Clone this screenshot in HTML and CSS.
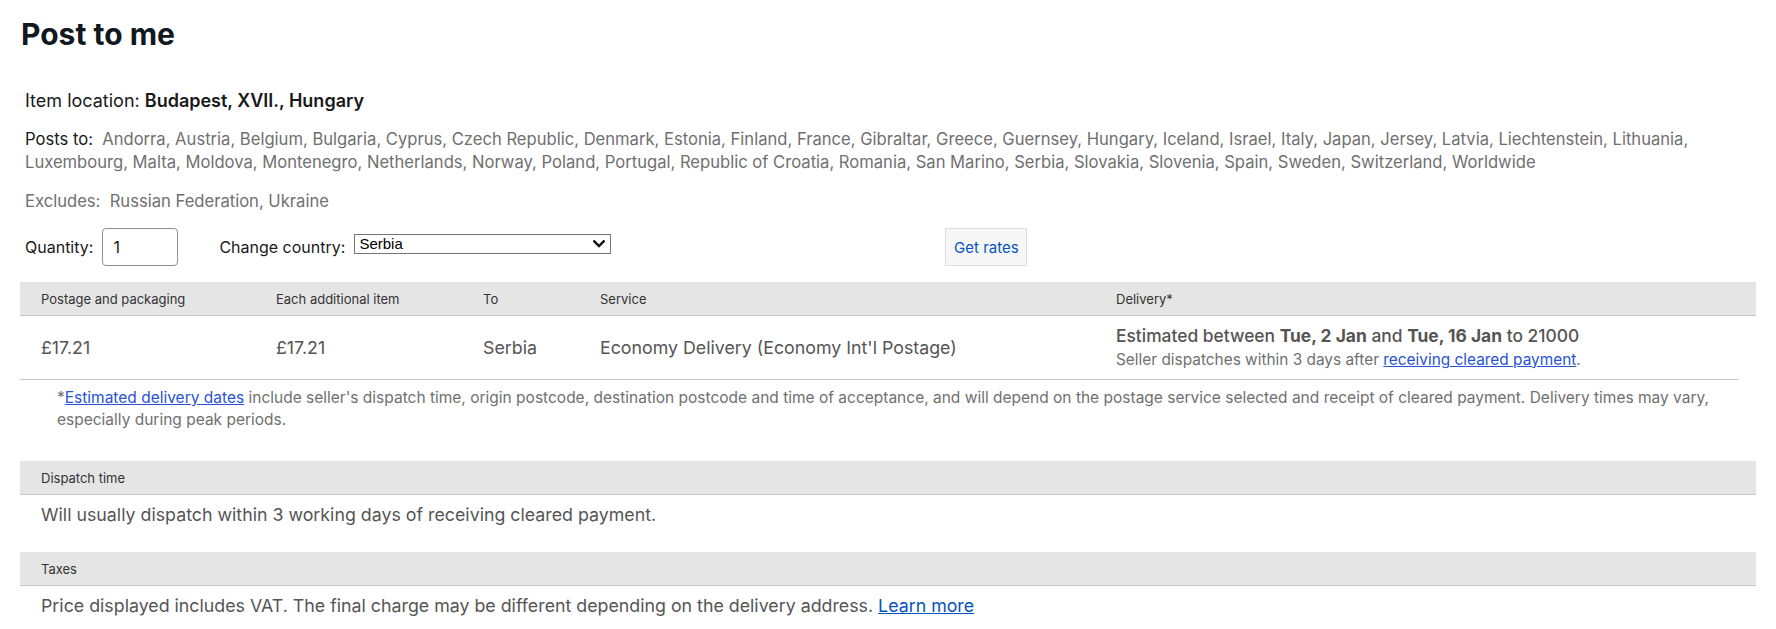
FILE: index.html
```html
<!DOCTYPE html>
<html lang="en">
<head>
<meta charset="utf-8">
<title>Post to me</title>
<link rel="stylesheet" href="styles.css">
</head>
<body>
<div class="page">
  <h2 class="title">Post to me</h2>
  <div class="info">
    <div class="loc">Item location: <b>Budapest, XVII., Hungary</b></div>
    <div class="posts"><span class="lbl">Posts to:</span>&nbsp; Andorra, Austria, Belgium, Bulgaria, Cyprus, Czech Republic, Denmark, Estonia, Finland, France, Gibraltar, Greece, Guernsey, Hungary, Iceland, Israel, Italy, Japan, Jersey, Latvia, Liechtenstein, Lithuania, Luxembourg, Malta, Moldova, Montenegro, Netherlands, Norway, Poland, Portugal, Republic of Croatia, Romania, San Marino, Serbia, Slovakia, Slovenia, Spain, Sweden, Switzerland, Worldwide</div>
    <div class="excl">Excludes:&nbsp; Russian Federation, Ukraine</div>
    <div class="controls">
      <label class="ctl-label">Quantity:</label>
      <input class="qty" type="text" value="1">
      <label class="ctl-label cc">Change country:</label>
      <div class="select-wrap">
        <select class="country"><option>Serbia</option></select>
        <svg class="chev" width="12" height="8" viewBox="0 0 12 8" aria-hidden="true"><path d="M1.3 1.3 L6 6 L10.7 1.3" fill="none" stroke="#111" stroke-width="2.4" stroke-linecap="square"/></svg>
      </div>
      <button class="rates" type="button">Get rates</button>
    </div>
  </div>

  <div class="ship">
    <div class="grid thead">
      <div class="cell">Postage and packaging</div>
      <div class="cell">Each additional item</div>
      <div class="cell">To</div>
      <div class="cell">Service</div>
      <div class="cell">Delivery*</div>
    </div>
    <div class="grid trow">
      <div class="cell val">£17.21</div>
      <div class="cell val">£17.21</div>
      <div class="cell val">Serbia</div>
      <div class="cell val">Economy Delivery (Economy Int'l Postage)</div>
      <div class="cell deliv">
        <div class="est">Estimated between <b>Tue, 2 Jan</b> and <b>Tue, 16 Jan</b> to 21000</div>
        <div class="disp">Seller dispatches within 3 days after <a href="#">receiving cleared payment</a>.</div>
      </div>
    </div>
  </div>

  <p class="note">*<a href="#">Estimated delivery dates</a> include seller's dispatch time, origin postcode, destination postcode and time of acceptance, and will depend on the postage service selected and receipt of cleared payment. Delivery times may vary, especially during peak periods.</p>

  <div class="sect-h">Dispatch time</div>
  <p class="sect-t">Will usually dispatch within 3 working days of receiving cleared payment.</p>

  <div class="sect-h tax">Taxes</div>
  <p class="sect-t">Price displayed includes VAT. The final charge may be different depending on the delivery address. <a class="learn" href="#">Learn more</a></p>
</div>
</body>
</html>
```

FILE: styles.css
```css
* { box-sizing: border-box; }
html, body { margin: 0; padding: 0; background: #fff; }
body {
  font-family: Inter, "Noto Sans", Roboto, sans-serif;
  color: #191919;
}
.page {
  padding: 0 20px 0 20px;
}
.title {
  margin: 16px 0 0 1px;
  font-size: 30px;
  line-height: 36px;
  font-weight: 700;
  color: #111820;
}
.info {
  padding-left: 5px;
  margin-top: 37px;
}
.loc {
  font-size: 18px;
  line-height: 24px;
  color: #191919;
}
.loc b { font-weight: 600; }
.posts {
  margin-top: 15px;
  font-size: 16.6px;
  line-height: 23px;
  color: #707070;
}
.posts .lbl { color: #191919; }
.excl {
  margin-top: 16px;
  font-size: 16.6px;
  line-height: 23px;
  color: #707070;
}
.controls {
  margin-top: 15px;
  display: flex;
  align-items: center;
  height: 38px;
}
.ctl-label {
  font-size: 16px;
  color: #191919;
}
.qty {
  margin-left: 9px;
  width: 76px;
  height: 38px;
  border: 1px solid #8f8f8f;
  border-radius: 4px;
  padding: 0 0 0 10px;
  font-family: inherit;
  font-size: 16px;
  color: #191919;
}
.cc { margin-left: 41px; }
.select-wrap {
  position: relative;
  margin-left: 9px;
  margin-bottom: 6px;
  width: 257px;
  height: 20px;
}
.country {
  display: block;
  -webkit-appearance: none;
  appearance: none;
  width: 100%;
  height: 20px;
  border: 1px solid #767676;
  border-radius: 0;
  background: #fff;
  font-family: Arial, "Liberation Sans", sans-serif;
  font-size: 15px;
  line-height: 18px;
  color: #000;
  padding: 0 0 0 4px;
  margin: 0;
}
.chev {
  position: absolute;
  right: 6px;
  top: 6px;
  pointer-events: none;
}
.rates {
  margin-left: 334px;
  width: 82px;
  height: 38px;
  background: #f7f7f7;
  border: 1px solid #dddddd;
  border-radius: 0;
  color: #0654ba;
  font-family: inherit;
  font-size: 15px;
  padding: 0;
}
.ship { margin-top: 16px; }
.grid {
  display: grid;
  grid-template-columns: 235px 207px 117px 516px 1fr;
}
.thead {
  background: #e5e5e5;
  border-bottom: 1px solid #c7c7c7;
  height: 34px;
  align-items: center;
  font-size: 13px;
  color: #333;
}
.cell { padding-left: 21px; }
.trow {
  height: 64px;
  align-items: center;
  border-bottom: 1px solid #c7c7c7;
  margin-right: 18px;
}
.val {
  font-size: 17.8px;
  color: #555;
}
.est {
  font-size: 17.4px;
  line-height: 24px;
  color: #555;
  font-weight: 500;
}
.est b { font-weight: 700; }
.disp {
  font-size: 15.4px;
  line-height: 24px;
  color: #707070;
}
a { color: #2853d6; text-decoration: underline; }
.note {
  margin: 7px 0 0 37px;
  font-size: 15.5px;
  line-height: 22px;
  color: #707070;
  padding-right: 20px;
}
.sect-h {
  margin-top: 30px;
  background: #e5e5e5;
  border-bottom: 1px solid #c7c7c7;
  height: 34px;
  display: flex;
  align-items: center;
  padding-left: 21px;
  font-size: 13px;
  color: #333;
}
.sect-h.tax { margin-top: 25px; }
.sect-t {
  margin: 8px 0 0 21px;
  font-size: 17.8px;
  line-height: 24px;
  color: #555;
}
.learn { color: #0654ba; }
```
